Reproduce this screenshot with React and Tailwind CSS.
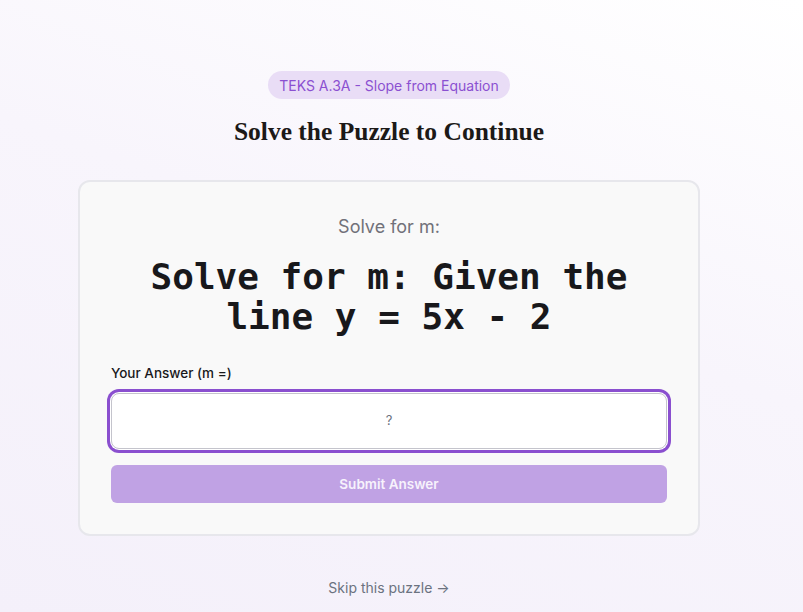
export default function App() {
  return (
    <div
      className="min-h-[612px] w-full bg-[linear-gradient(200deg,#ffffff_0%,#f8f5fc_45%,#f4f0fa_100%)]"
      style={{ fontFamily: "Inter, 'Noto Sans', sans-serif" }}
    >
      <div className="flex flex-col items-center pr-[25px] pt-[71px]">
        <div className="h-[28px] px-[11px] rounded-full bg-[#e9ddf6] text-[#8b50d1] text-[14px] flex items-center">
          TEKS A.3A - Slope from Equation
        </div>
        <h1
          className="mt-[17px] text-[25.5px] leading-8 font-bold text-[#1c1917]"
          style={{ fontFamily: "'Liberation Serif', serif" }}
        >
          Solve the Puzzle to Continue
        </h1>
        <div className="mt-8 w-[622px] rounded-xl border-2 border-[#e7e7ec] bg-[#f9f9f9] p-[31px]">
          <div className="text-center text-[18px] leading-7 text-[#71717a]">Solve for m:</div>
          <div
            className="mt-4 text-center text-[36px] leading-10 font-bold text-[#18181b]"
            style={{ fontFamily: "'DejaVu Sans Mono', monospace" }}
          >
            Solve for m: Given the
            <br />
            line y = 5x - 2
          </div>
          <div className="mt-[26px] text-[13.5px] leading-5 font-medium text-[#18181b]">Your Answer (m =)</div>
          <div className="mt-[10px] h-[56px] rounded-lg border border-[#c4c4cc] bg-white flex items-center justify-center text-[13px] text-[#6b7280] shadow-[0_0_0_1px_#ffffff,0_0_0_4px_#8a4fcf]">
            ?
          </div>
          <div className="mt-4 h-[38px] rounded-md bg-[#c0a2e4] flex items-center justify-center text-[13.5px] font-semibold text-[#f7f2fc]">
            Submit Answer
          </div>
        </div>
        <div className="mt-[42px] text-[14px] leading-5 text-[#6b7280]">Skip this puzzle →</div>
      </div>
    </div>
  );
}
